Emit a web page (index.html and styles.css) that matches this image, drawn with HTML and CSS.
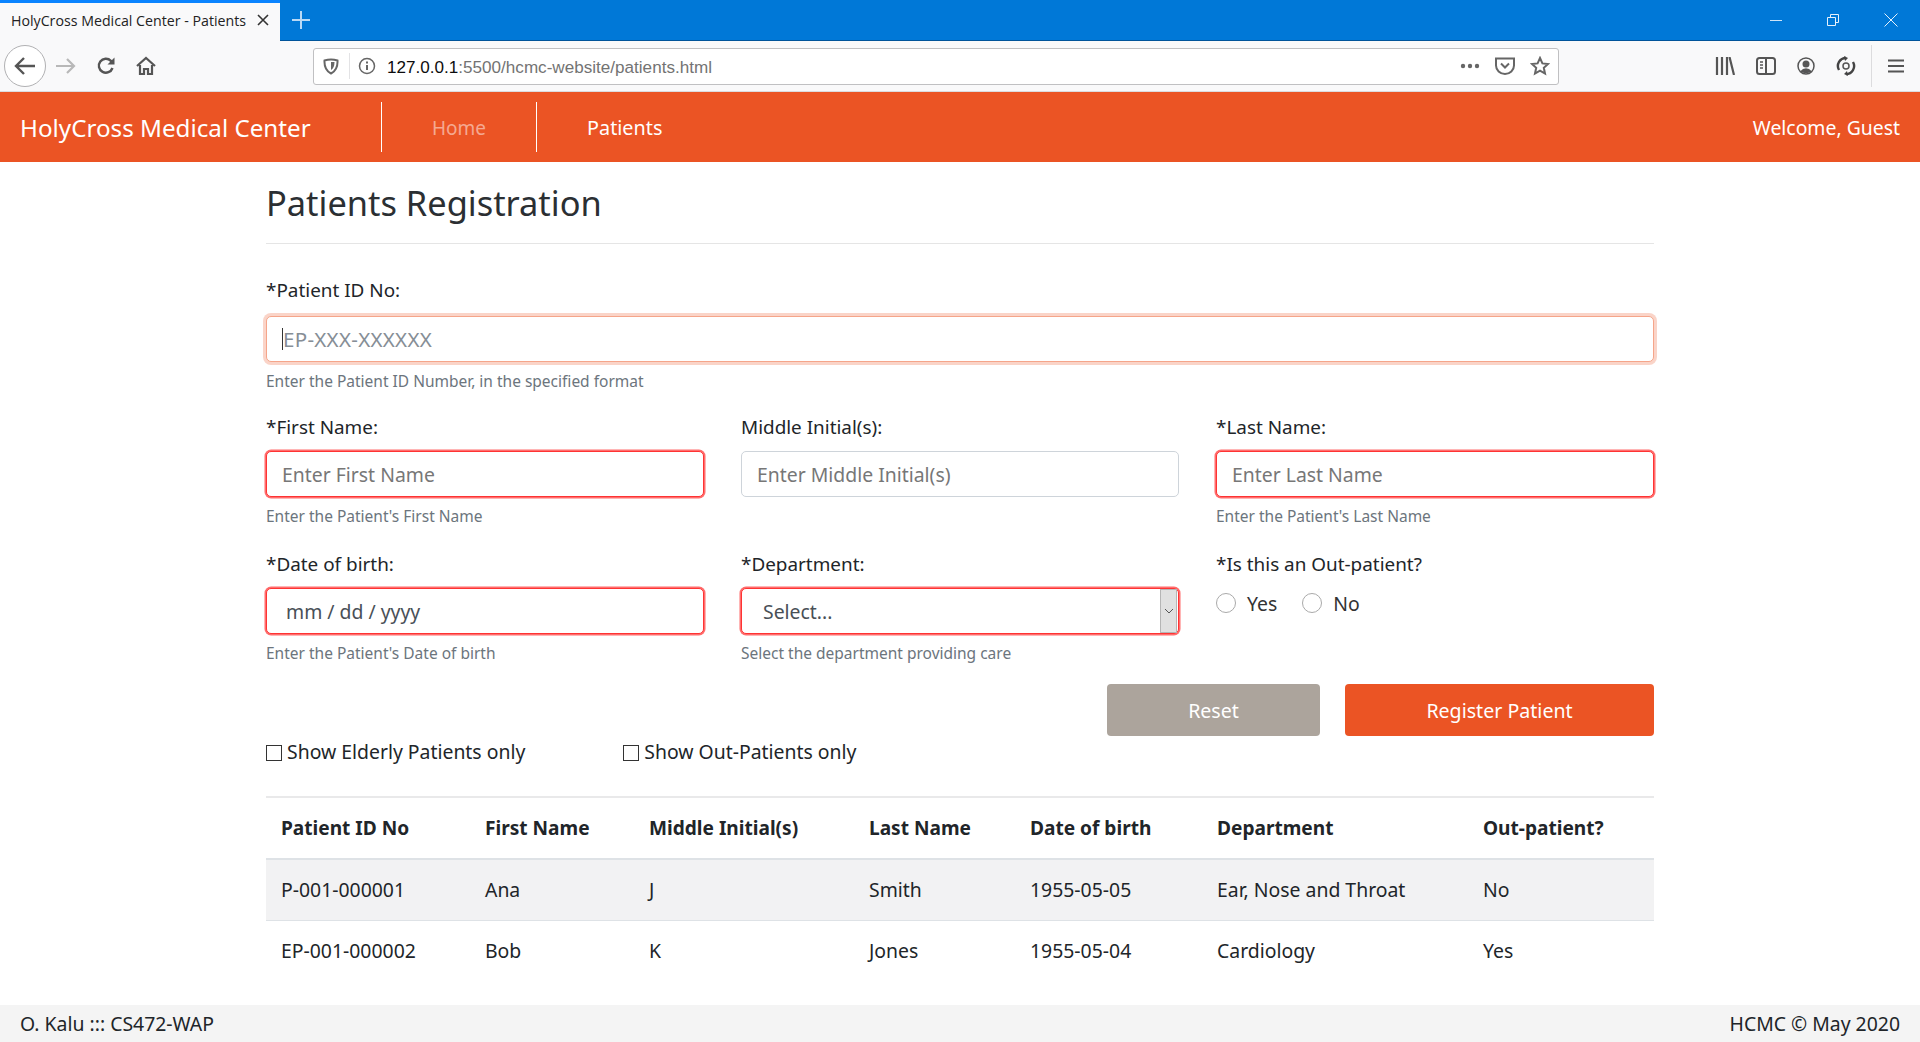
FILE: index.html
```html
<!DOCTYPE html>
<html>
<head>
    <title>HolyCross Medical Center - Patients</title>
    <link rel="stylesheet" href="styles.css">
</head>
<body>
    <div class="titlebar">
        <div class="tab">
            <span class="tab-title">HolyCross Medical Center - Patients</span>
            <svg class="tab-close" width="14" height="14" viewBox="0 0 14 14"><path d="M2 2l10 10M12 2L2 12" stroke="#333" stroke-width="1.6" fill="none"/></svg>
        </div>
        <svg class="new-tab" width="18" height="18" viewBox="0 0 18 18"><path d="M9 0v18M0 9h18" stroke="#b9d9f5" stroke-width="2" fill="none"/></svg>
        <div class="window-btns">
            <svg width="12" height="12" viewBox="0 0 12 12"><path d="M0 6.500h12" stroke="#cfe4f7" stroke-width="1" fill="none"/></svg>
            <svg width="12" height="12" viewBox="0 0 12 12"><path d="M.5 3.500h8v8h-8zM3.500 3.500v-3h8v8h-3" stroke="#e6f1fb" stroke-width="1" fill="none"/></svg>
            <svg width="14" height="14" viewBox="0 0 14 14"><path d="M.5.5l13 13M13.500.5l-13 13" stroke="#e6f1fb" stroke-width="1" fill="none"/></svg>
        </div>
    </div>

    <div class="toolbar">
        <div class="back-btn">
            <svg width="22" height="18" viewBox="0 0 22 18"><path d="M10 1L2 9l8 8M2 9h19" stroke="#555" stroke-width="2.4" fill="none"/></svg>
        </div>
        <svg class="tool-forward" width="20" height="16" viewBox="0 0 20 16"><path d="M11 1l7 7-7 7M18 8H0" stroke="#b8b8b8" stroke-width="2.2" fill="none"/></svg>
        <svg class="tool-reload" width="20" height="20" viewBox="0 0 20 20"><path d="M16.500 12a7 7 0 1 1-1.600-7.200L17 7" stroke="#555" stroke-width="2.4" fill="none"/><path d="M18.500 1.500v7h-7z" fill="#555"/></svg>
        <svg class="tool-home" width="20" height="20" viewBox="0 0 20 20"><path d="M1 10l9-8 9 8M4 9v9h4v-5h4v5h4V9" stroke="#555" stroke-width="2.2" fill="none"/></svg>
        <div class="urlbar">
            <svg class="url-shield" width="16" height="17" viewBox="0 0 16 17"><path d="M1.500 2.500Q8 .5 14.500 2.500Q15 12 8 15.500Q1 12 1.500 2.500z" stroke="#666" stroke-width="2" fill="none"/><path d="M8 4h3.500Q11.500 10 8 12z" fill="#666"/></svg>
            <span class="url-sep"></span>
            <svg class="url-info" width="18" height="18" viewBox="0 0 18 18"><circle cx="9" cy="9" r="7.500" stroke="#666" stroke-width="1.500" fill="none"/><path d="M9 8v5M9 4.500v2" stroke="#666" stroke-width="2" fill="none"/></svg>
            <span class="url-text">127.0.0.1<span class="url-muted">:5500/hcmc-website/patients.html</span></span>
            <svg class="url-dots" width="20" height="6" viewBox="0 0 20 6"><circle cx="3" cy="3" r="2.200" fill="#666"/><circle cx="10" cy="3" r="2.200" fill="#666"/><circle cx="17" cy="3" r="2.200" fill="#666"/></svg>
            <svg class="url-pocket" width="20" height="18" viewBox="0 0 20 18"><path d="M1 1.500h18v7a9 8.500 0 0 1-18 0z" stroke="#666" stroke-width="2" fill="none"/><path d="M6 6.500l4 4 4-4" stroke="#666" stroke-width="2" fill="none"/></svg>
            <svg class="url-star" width="20" height="20" viewBox="0 0 20 20"><path d="M10 2l2.400 5.400 5.600.6-4.200 3.800 1.200 5.700-5-2.900-5 2.900 1.200-5.700L2 8l5.600-.6z" stroke="#666" stroke-width="2" fill="none"/></svg>
        </div>
        <div class="tool-right">
            <svg width="20" height="18" viewBox="0 0 20 18"><path d="M2 0v18M7 0v18M12 0v18M14.500 0l4.500 18" stroke="#555" stroke-width="2.200" fill="none"/></svg>
            <svg width="20" height="18" viewBox="0 0 20 18"><rect x="1" y="1" width="18" height="16" rx="2.500" stroke="#555" stroke-width="2" fill="none"/><path d="M10 1v16" stroke="#555" stroke-width="2"/><path d="M4 5h3M4 8h3M4 11h3" stroke="#555" stroke-width="1.500"/></svg>
            <svg width="18" height="18" viewBox="0 0 18 18"><circle cx="9" cy="9" r="8" stroke="#555" stroke-width="1.500" fill="none"/><circle cx="9" cy="7" r="3.500" fill="#555"/><path d="M3 14.500Q9 8 15 14.500Q9 18 3 14.500z" fill="#555"/></svg>
            <svg width="20" height="20" viewBox="0 0 20 20"><path d="M3 14A8 8 0 0 1 10 2M17 6a8 8 0 0 1-7 12" stroke="#444" stroke-width="2.400" fill="none"/><circle cx="10" cy="10" r="3" stroke="#555" stroke-width="1.500" fill="none"/><path d="M8 0l4 2-3 3zM12 20l-4-2 3-3z" fill="#444"/></svg>
            <span class="tool-sep"></span>
            <svg width="16" height="14" viewBox="0 0 16 14"><path d="M0 1.500h16M0 7h16M0 12.500h16" stroke="#555" stroke-width="2.200" fill="none"/></svg>
        </div>
    </div>

    <header class="navbar">
        <a class="brand">HolyCross Medical Center</a>
        <a class="nav-link nav-muted">Home</a>
        <a class="nav-link">Patients</a>
        <span class="welcome">Welcome, Guest</span>
    </header>

    <main class="container">
        <h1 class="page-title">Patients Registration</h1>
        <hr class="rule">

        <form>
            <div class="field field-full">
                <label class="field-label">*Patient ID No:</label>
                <div class="input-box input-focus"><span class="caret"></span><span class="id-format">EP-XXX-XXXXXX</span></div>
                <small class="help">Enter the Patient ID Number, in the specified format</small>
            </div>

            <div class="form-row">
                <div class="field">
                    <label class="field-label">*First Name:</label>
                    <div class="input-box input-invalid">Enter First Name</div>
                    <small class="help">Enter the Patient's First Name</small>
                </div>
                <div class="field">
                    <label class="field-label">Middle Initial(s):</label>
                    <div class="input-box">Enter Middle Initial(s)</div>
                </div>
                <div class="field">
                    <label class="field-label">*Last Name:</label>
                    <div class="input-box input-invalid">Enter Last Name</div>
                    <small class="help">Enter the Patient's Last Name</small>
                </div>
            </div>

            <div class="form-row">
                <div class="field">
                    <label class="field-label">*Date of birth:</label>
                    <div class="input-box input-invalid input-date">mm / dd / yyyy</div>
                    <small class="help">Enter the Patient's Date of birth</small>
                </div>
                <div class="field">
                    <label class="field-label">*Department:</label>
                    <div class="input-box input-invalid input-select">
                        <span>Select...</span>
                        <span class="select-arrow">
                            <svg width="10" height="6" viewBox="0 0 10 6"><path d="M1 1l4 4 4-4" stroke="#555" stroke-width="1" fill="none"/></svg>
                        </span>
                    </div>
                    <small class="help">Select the department providing care</small>
                </div>
                <div class="field">
                    <label class="field-label">*Is this an Out-patient?</label>
                    <div class="radio-row">
                        <span class="radio"></span><span class="radio-text">Yes</span>
                        <span class="radio"></span><span class="radio-text">No</span>
                    </div>
                </div>
            </div>

            <div class="actions">
                <div class="filters">
                    <span class="filter"><span class="check"></span>Show Elderly Patients only</span>
                    <span class="filter"><span class="check"></span>Show Out-Patients only</span>
                </div>
                <div class="buttons">
                    <button type="button" class="btn btn-reset">Reset</button>
                    <button type="button" class="btn btn-submit">Register Patient</button>
                </div>
            </div>
        </form>

        <table class="patients">
            <thead>
                <tr>
                    <th>Patient ID No</th>
                    <th>First Name</th>
                    <th>Middle Initial(s)</th>
                    <th>Last Name</th>
                    <th>Date of birth</th>
                    <th>Department</th>
                    <th>Out-patient?</th>
                </tr>
            </thead>
            <tbody>
                <tr class="row-odd">
                    <td>P-001-000001</td>
                    <td>Ana</td>
                    <td>J</td>
                    <td>Smith</td>
                    <td>1955-05-05</td>
                    <td>Ear, Nose and Throat</td>
                    <td>No</td>
                </tr>
                <tr>
                    <td>EP-001-000002</td>
                    <td>Bob</td>
                    <td>K</td>
                    <td>Jones</td>
                    <td>1955-05-04</td>
                    <td>Cardiology</td>
                    <td>Yes</td>
                </tr>
            </tbody>
        </table>
    </main>

    <footer class="footer">
        <span>O. Kalu ::: CS472-WAP</span>
        <span>HCMC © May 2020</span>
    </footer>
</body>
</html>
```

FILE: styles.css
```css
* {
    box-sizing: border-box;
}

html, body {
    height: 100%;
}

body {
    margin: 0;
    display: flex;
    flex-direction: column;
    height: 1042px;
    overflow: hidden;
    font-family: "Noto Sans", "Open Sans", sans-serif;
    font-size: 19.4px;
    color: #212529;
    background-color: #fff;
}

/* browser chrome */
.titlebar {
    height: 41px;
    flex: none;
    display: flex;
    align-items: center;
    background-color: #0078d7;
    border-bottom: 1px solid #00549a;
}

.tab {
    width: 280px;
    height: 41px;
    padding: 0 10px 3px 11px;
    display: flex;
    align-items: center;
    justify-content: space-between;
    background-color: #f9f9fa;
    border-top: 3px solid #0a84ff;
    font-family: "Open Sans", sans-serif;
    font-size: 14.2px;
    white-space: nowrap;
    color: #222;
}

.new-tab {
    margin-left: 12px;
}

.window-btns {
    margin-left: auto;
    padding-right: 22px;
    display: flex;
    align-items: center;
    gap: 45px;
}

.toolbar {
    height: 51px;
    flex: none;
    display: flex;
    align-items: center;
    background-color: #f9f9fa;
    border-bottom: 1px solid #dcdcde;
}

.back-btn {
    width: 42px;
    height: 42px;
    margin-left: 4px;
    display: flex;
    align-items: center;
    justify-content: center;
    background-color: #fff;
    border: 1px solid #b1b1b3;
    border-radius: 50%;
}

.tool-forward {
    margin-left: 10px;
}

.tool-reload {
    margin-left: 20px;
}

.tool-home {
    margin-left: 20px;
}

.urlbar {
    width: 1246px;
    height: 37px;
    margin-left: 157px;
    padding: 0 8px 0 0;
    display: flex;
    align-items: center;
    background-color: #fff;
    border: 1px solid #c0c0c2;
    border-radius: 3px;
}

.url-shield {
    margin-left: 9px;
}

.url-sep {
    width: 1px;
    height: 26px;
    margin-left: 10px;
    background-color: #e3e3e5;
}

.url-info {
    margin-left: 8px;
}

.url-text {
    margin-left: 11px;
    padding-top: 3px;
    font-family: "Liberation Sans", sans-serif;
    font-size: 17.1px;
    color: #0c0c0d;
}

.url-muted {
    color: #737373;
}

.url-dots {
    margin-left: auto;
}

.url-pocket {
    margin-left: 15px;
}

.url-star {
    margin-left: 15px;
}

.tool-right {
    margin-left: 156px;
    display: flex;
    align-items: center;
    gap: 21px;
}

.tool-sep {
    width: 1px;
    height: 42px;
    margin: 0 -5px 0 -6px;
    background-color: #dcdcde;
}

/* site header */
.navbar {
    height: 70px;
    flex: none;
    padding: 0 20px;
    display: flex;
    align-items: center;
    background-color: #eb5424;
    color: #fff;
}

.brand {
    width: 361px;
    font-size: 24.2px;
}

.nav-link {
    height: 50px;
    padding: 0 50px;
    display: flex;
    align-items: center;
    border-left: 1px solid #fff;
    font-size: 19.800px;
}

.nav-muted {
    padding-top: 2px;
    font-size: 19px;
    color: rgba(255, 255, 255, 0.5);
}

.welcome {
    margin-left: auto;
}

/* main content */
.container {
    width: 1388px;
    margin-left: 266px;
    flex: 1;
    padding-top: 21px;
}

.page-title {
    margin: 0;
    font-size: 34.4px;
    line-height: 40px;
    font-weight: 400;
    color: #2b2f33;
}

.rule {
    margin: 20px 0 0;
    border: 0;
    border-top: 1px solid #e5e5e5;
}

form {
    padding-top: 34px;
}

.form-row {
    display: grid;
    grid-template-columns: repeat(3, 1fr);
    gap: 37px;
    margin-top: 26px;
}

.field {
    height: 111px;
}

.field-label {
    display: block;
    height: 25px;
    margin-bottom: 11px;
    line-height: 25px;
    font-size: 18.9px;
}

.field-full .field-label {
    margin-bottom: 13px;
}

.input-box {
    height: 46px;
    padding: 0 15px;
    display: flex;
    align-items: center;
    color: #777;
    background-color: #fff;
    border: 1px solid #ced4da;
    border-radius: 5px;
}

.input-invalid {
    border: 1px solid #f33;
    box-shadow: 0 0 0 1.5px rgba(255, 60, 60, 0.75);
}

.input-focus {
    border: 1px solid #f5a58a;
    box-shadow: 0 0 0 3px rgba(235, 84, 36, 0.25);
}

.caret {
    width: 1px;
    height: 22px;
    background-color: #333;
}

.id-format {
    font-size: 20.5px;
    letter-spacing: 0.3px;
    color: #868e96;
}

.input-date {
    padding-left: 19px;
    color: #495057;
}

.input-select {
    padding: 0 1px 0 21px;
    justify-content: space-between;
    color: #495057;
}

.select-arrow {
    width: 17px;
    height: 44px;
    display: flex;
    align-items: center;
    justify-content: center;
    background-color: #e0e0e0;
    border: 1px solid #b5b5b5;
}

.help {
    display: block;
    margin-top: 9px;
    font-size: 15.5px;
    line-height: 20px;
    color: #6c757d;
}

.radio-row {
    height: 40px;
    margin-top: -5px;
    display: flex;
    align-items: center;
    color: #333;
}

.radio {
    width: 20px;
    height: 20px;
    background-color: #fff;
    border: 1px solid #aaa;
    border-radius: 50%;
}

.radio-text {
    margin: 0 25px 0 11px;
}

.actions {
    height: 112px;
    margin-top: 21px;
    display: flex;
    justify-content: space-between;
}

.filters {
    padding-top: 55px;
    display: flex;
    align-items: flex-start;
    gap: 98px;
    line-height: 26px;
}

.filter {
    display: flex;
    align-items: center;
}

.check {
    width: 16px;
    height: 16px;
    margin: 2px 5px 0 0;
    border: 1px solid #333;
    background-color: #fff;
}

.buttons {
    display: flex;
    gap: 25px;
    align-items: flex-start;
}

.btn {
    height: 52px;
    border: 0;
    border-radius: 4px;
    font-family: inherit;
    font-size: 19.600px;
    color: #fff;
}

.btn-reset {
    width: 213px;
    background-color: #aca49c;
}

.btn-submit {
    width: 309px;
    background-color: #eb5424;
}

/* table */
.patients {
    width: 100%;
    table-layout: fixed;
    border-collapse: collapse;
    border-top: 2px solid #e9e9ea;
}

.patients th, .patients td {
    padding: 0 15px;
    text-align: left;
    white-space: nowrap;
}

.patients th {
    height: 62px;
    font-size: 19.1px;
    border-bottom: 2px solid #dee2e6;
}

.patients td {
    height: 61px;
}

.patients th:nth-child(1) { width: 204px; }
.patients th:nth-child(2) { width: 164px; }
.patients th:nth-child(3) { width: 220px; }
.patients th:nth-child(4) { width: 161px; }
.patients th:nth-child(5) { width: 187px; }
.patients th:nth-child(6) { width: 266px; }

.row-odd {
    background-color: #f2f2f3;
    border-bottom: 1px solid #dee2e6;
}

/* footer */
.footer {
    height: 37px;
    flex: none;
    padding: 0 20px;
    display: flex;
    align-items: center;
    justify-content: space-between;
    background-color: #f4f4f4;
}
```
